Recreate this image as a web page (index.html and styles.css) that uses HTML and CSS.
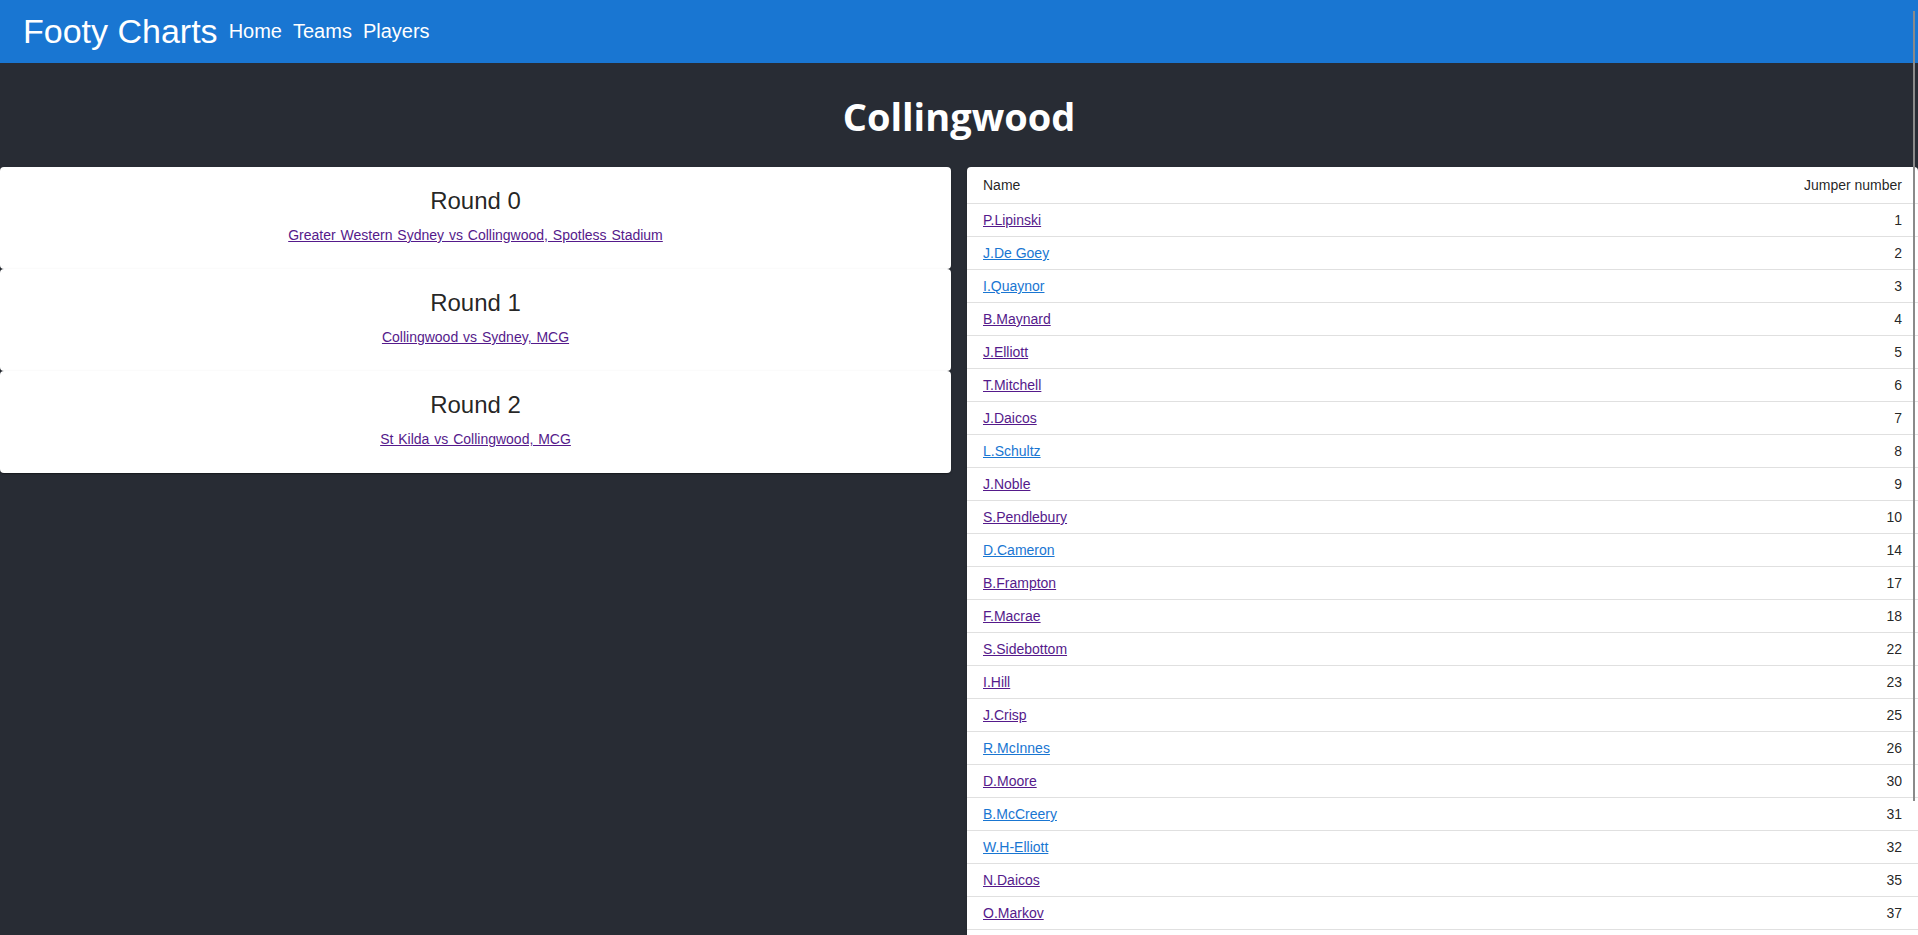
FILE: index.html
```html
<!DOCTYPE html>
<html lang="en">
<head>
<meta charset="utf-8">
<title>Footy Charts - Collingwood</title>
<link rel="stylesheet" href="styles.css">
</head>
<body>
<header class="appbar">
  <span class="brand">Footy Charts</span>
  <nav class="nav">
    <a class="nav-link" href="#">Home</a>
    <a class="nav-link" href="#">Teams</a>
    <a class="nav-link" href="#">Players</a>
  </nav>
</header>
<main class="page">
  <h1 class="team-title">Collingwood</h1>
  <div class="columns">
    <section class="rounds">
      <div class="card">
        <h2 class="card-title">Round 0</h2>
        <a class="match-link" href="#">Greater Western Sydney vs Collingwood, Spotless Stadium</a>
      </div>
      <div class="card">
        <h2 class="card-title">Round 1</h2>
        <a class="match-link" href="#">Collingwood vs Sydney, MCG</a>
      </div>
      <div class="card">
        <h2 class="card-title">Round 2</h2>
        <a class="match-link" href="#">St Kilda vs Collingwood, MCG</a>
      </div>
    </section>
    <section class="players">
      <table class="player-table">
        <thead>
          <tr><th class="col-name">Name</th><th class="col-num">Jumper number</th></tr>
        </thead>
        <tbody>
          <tr><td><a class="pl visited" href="#">P.Lipinski</a></td><td class="col-num">1</td></tr>
          <tr><td><a class="pl" href="#">J.De Goey</a></td><td class="col-num">2</td></tr>
          <tr><td><a class="pl" href="#">I.Quaynor</a></td><td class="col-num">3</td></tr>
          <tr><td><a class="pl visited" href="#">B.Maynard</a></td><td class="col-num">4</td></tr>
          <tr><td><a class="pl visited" href="#">J.Elliott</a></td><td class="col-num">5</td></tr>
          <tr><td><a class="pl visited" href="#">T.Mitchell</a></td><td class="col-num">6</td></tr>
          <tr><td><a class="pl visited" href="#">J.Daicos</a></td><td class="col-num">7</td></tr>
          <tr><td><a class="pl" href="#">L.Schultz</a></td><td class="col-num">8</td></tr>
          <tr><td><a class="pl visited" href="#">J.Noble</a></td><td class="col-num">9</td></tr>
          <tr><td><a class="pl visited" href="#">S.Pendlebury</a></td><td class="col-num">10</td></tr>
          <tr><td><a class="pl" href="#">D.Cameron</a></td><td class="col-num">14</td></tr>
          <tr><td><a class="pl visited" href="#">B.Frampton</a></td><td class="col-num">17</td></tr>
          <tr><td><a class="pl visited" href="#">F.Macrae</a></td><td class="col-num">18</td></tr>
          <tr><td><a class="pl visited" href="#">S.Sidebottom</a></td><td class="col-num">22</td></tr>
          <tr><td><a class="pl visited" href="#">I.Hill</a></td><td class="col-num">23</td></tr>
          <tr><td><a class="pl visited" href="#">J.Crisp</a></td><td class="col-num">25</td></tr>
          <tr><td><a class="pl" href="#">R.McInnes</a></td><td class="col-num">26</td></tr>
          <tr><td><a class="pl visited" href="#">D.Moore</a></td><td class="col-num">30</td></tr>
          <tr><td><a class="pl" href="#">B.McCreery</a></td><td class="col-num">31</td></tr>
          <tr><td><a class="pl" href="#">W.H-Elliott</a></td><td class="col-num">32</td></tr>
          <tr><td><a class="pl visited" href="#">N.Daicos</a></td><td class="col-num">35</td></tr>
          <tr><td><a class="pl visited" href="#">O.Markov</a></td><td class="col-num">37</td></tr>
        </tbody>
      </table>
    </section>
  </div>
</main>
<div class="scroll-thumb"></div>
</body>
</html>
```
FILE: styles.css
```css
html {
  overflow: hidden;
}
body {
  margin: 0;
  background: #282c34;
  font-family: "Liberation Sans", Arial, sans-serif;
}
.appbar {
  height: 63px;
  background: #1976d2;
  display: flex;
  align-items: center;
  gap: 11px;
  padding-left: 23px;
  color: #fff;
}
.brand {
  font-size: 34px;
  line-height: 1.15;
}
.nav {
  display: flex;
  gap: 11px;
}
.nav-link {
  font-size: 20px;
  line-height: 1.15;
  color: #fff;
  text-decoration: none;
}
.page {
  margin: 0;
}
.team-title {
  margin: 0;
  padding: 30px 0 28px;
  text-align: center;
  color: #fff;
  font-family: "Open Sans", "Noto Sans", sans-serif;
  font-weight: 700;
  font-size: 38px;
  line-height: 46px;
}
.columns {
  display: grid;
  grid-template-columns: 1fr 1fr;
  column-gap: 16px;
  align-items: start;
}
.card {
  background: #fff;
  border-radius: 4px;
  box-shadow: 0 2px 1px -1px rgba(0,0,0,0.2), 0 1px 1px 0 rgba(0,0,0,0.14), 0 1px 3px 0 rgba(0,0,0,0.12);
  padding: 18px 16px 24px;
  text-align: center;
  color: rgba(0,0,0,0.87);
}
.card-title {
  margin: 0 0 8px;
  font-weight: 400;
  font-size: 24px;
  line-height: 32px;
}
.match-link {
  font-size: 14px;
  line-height: 20px;
  word-spacing: 1px;
  color: #551a8b;
  text-decoration: underline;
}
.players {
  background: #fff;
  border-radius: 4px;
  padding-bottom: 12px;
  box-shadow: 0 2px 1px -1px rgba(0,0,0,0.2), 0 1px 1px 0 rgba(0,0,0,0.14), 0 1px 3px 0 rgba(0,0,0,0.12);
}
.player-table {
  width: 100%;
  border-collapse: collapse;
  font-size: 14px;
  color: rgba(0,0,0,0.87);
}
.player-table th {
  font-weight: 400;
  line-height: 24px;
  padding: 6px 16px;
  border-bottom: 1px solid #e0e0e0;
  text-align: left;
}
.player-table td {
  line-height: 20px;
  padding: 6px 16px;
  border-bottom: 1px solid #e0e0e0;
}
.player-table .col-num {
  text-align: right;
}
.pl {
  color: #1976d2;
  text-decoration: underline;
}
.pl.visited {
  color: #551a8b;
}
.scroll-thumb {
  position: fixed;
  top: 11px;
  right: 3px;
  width: 2px;
  height: 790px;
  background: #8a8a8a;
}
```
